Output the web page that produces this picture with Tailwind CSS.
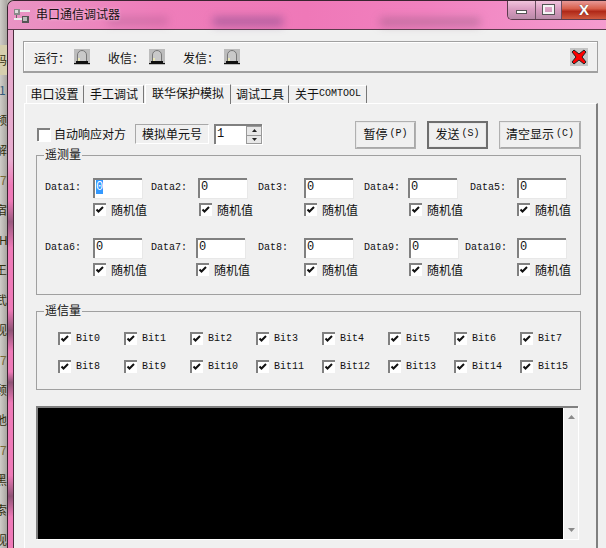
<!DOCTYPE html>
<html>
<head>
<meta charset="utf-8">
<script src="https://cdn.jsdelivr.net/npm/@tailwindcss/browser@4"></script>
</head>
<body class="w-[606px] h-[548px] overflow-hidden bg-[#b5b2ac] font-['Noto_Sans_CJK_SC',sans-serif] text-[12px] leading-none text-[#111]">
<div class="flex w-[606px] h-[548px]">
  <!-- desktop strip -->
  <div class="w-[7px] h-[548px] overflow-hidden shrink-0 pt-[45px] text-[#33300f] bg-[linear-gradient(90deg,#cfcdc8,#a8a5a0)]">
    <div class="h-[30px] flex items-center -ml-[5px] bg-[#d6cfae]">码</div>
    <div class="h-[30px] flex items-center -ml-[1px] text-[#345a7a]">1</div>
    <div class="h-[30px] flex items-center -ml-[5px]">频</div>
    <div class="h-[30px] flex items-center -ml-[5px]">解</div>
    <div class="h-[30px] flex items-center text-[#7a6a3a]">7</div>
    <div class="h-[30px] flex items-center -ml-[5px]">宿</div>
    <div class="h-[30px] flex items-center -ml-[1px]">H</div>
    <div class="h-[30px] flex items-center -ml-[5px]">王</div>
    <div class="h-[30px] flex items-center -ml-[5px]">武</div>
    <div class="h-[30px] flex items-center -ml-[5px]">视</div>
    <div class="h-[30px] flex items-center text-[#7a6a3a]">7</div>
    <div class="h-[30px] flex items-center -ml-[5px]">顾</div>
    <div class="h-[30px] flex items-center -ml-[5px]">地</div>
    <div class="h-[30px] flex items-center text-[#7a6a3a]">7</div>
    <div class="h-[30px] flex items-center -ml-[5px]">黑</div>
    <div class="h-[30px] flex items-center -ml-[5px]">索</div>
    <div class="h-[30px] flex items-center -ml-[5px]">视</div>
  </div>

  <!-- window -->
  <div class="flex-1 min-w-0 flex flex-col border-l border-t border-[#3a2430] rounded-tl-[7px] overflow-hidden">
    <!-- title bar -->
    <div class="relative h-[29px] shrink-0 flex items-start border-b border-[#5c3a4c] bg-[linear-gradient(90deg,#e994c4_0%,#ee7dba_25%,#ef78b8_50%,#f181bf_70%,#f49ccf_100%)]">
      <div class="absolute left-[100px] top-[16px] w-[60px] h-[8px] bg-[#7a3f70]/25 blur-[4px]"></div>
      <div class="absolute left-[205px] top-[16px] w-[70px] h-[9px] bg-[#6a3f80]/45 blur-[4px]"></div>
      <div class="absolute left-[372px] top-[17px] w-[100px] h-[8px] bg-[#7a4f70]/40 blur-[4px]"></div>
      <svg class="relative ml-[5px] mt-[6px]" width="18" height="18" viewBox="0 0 18 18">
        <rect x="1" y="2" width="6" height="6" fill="#8a8a8a"/><rect x="2" y="3" width="3" height="3" fill="#ddd"/>
        <rect x="7" y="3" width="10" height="2" fill="#ececec"/>
        <path d="M3.500 8v4" stroke="#666" stroke-width="1"/>
        <rect x="1" y="11" width="9" height="2" fill="#ececec"/>
        <rect x="9" y="9" width="7" height="7" fill="#555"/><rect x="10" y="10" width="4" height="4" fill="#bbb"/>
      </svg>
      <span class="relative ml-[5px] mt-[7px] text-[#1a1014] [text-shadow:0_0_3px_#f8c8e0]">串口通信调试器</span>
      <div class="relative ml-auto flex h-[20px] w-[99px] mt-[-1px] border-l border-b border-[#5c3a4c] rounded-bl-[5px] overflow-hidden">
        <div class="w-[28px] flex items-center justify-center border-r border-[#6a4f60] bg-[linear-gradient(180deg,#f4c8e0,#d99cc0_50%,#b98aa8)]">
          <div class="w-[11px] h-[4px] mt-[5px] bg-white border border-[#555]"></div>
        </div>
        <div class="w-[26px] flex items-center justify-center border-r border-[#6a4f60] bg-[linear-gradient(180deg,#f4c8e0,#d99cc0_50%,#b98aa8)]">
          <div class="w-[11px] h-[9px] bg-transparent border-2 border-[#f4f4f4] outline outline-[#555]"></div>
        </div>
        <div class="flex-1 flex items-center justify-center bg-[linear-gradient(180deg,#eaa0a0,#d8604c_45%,#b02818_60%,#d05a40)]">
          <span class="text-white text-[15px] font-bold font-['Liberation_Sans',sans-serif] [text-shadow:0_0_1px_#333]">X</span>
        </div>
      </div>
    </div>

    <div class="flex-1 flex min-h-0">
      <!-- frame -->
      <div class="w-[5px] shrink-0 bg-[linear-gradient(180deg,#e6a8cc_0%,#e8aed0_25%,#ef7ab8_30%,#ef7ab8_33%,#9a5a80_37%,#ef7ab8_42%,#ef7ab8_54%,#8f5376_58%,#ef7ab8_62%,#ef7ab8_66%,#8f5376_68%,#ef7ab8_72%,#ef7ab8_86%,#8f5376_90%,#ef7ab8_94%,#ef7ab8_100%)]"></div>
      <!-- client -->
      <div class="flex-1 min-w-0 border-l border-[#4a2c3c] bg-[#f0f0f0] pl-[9px] pt-[11px]">
        <!-- status -->
        <div class="w-[575px] h-[32px] flex items-center border border-[#a0a0a0] border-b-2 shadow-[inset_1px_1px_0_#fff] pl-[10px] pr-[9px]">
          <span class="w-[40px] pt-[2px]">运行：</span>
          <svg width="16" height="16" viewBox="0 0 16 16" class="mr-[18px]"><rect width="16" height="16" fill="#bcbcbc"/><path d="M3.500 12.500V6a4.500 4.500 0 0 1 9 0v6.500" fill="#c9c9c9" stroke="#777"/><path d="M5 9v3" stroke="#f4f1b0" stroke-width="1.500"/><rect x="2" y="12" width="12" height="2" fill="#111"/><rect x="0" y="14" width="16" height="1" fill="#111"/></svg>
          <span class="w-[41px] pt-[2px]">收信：</span>
          <svg width="16" height="16" viewBox="0 0 16 16" class="mr-[18px]"><rect width="16" height="16" fill="#bcbcbc"/><path d="M3.500 12.500V6a4.500 4.500 0 0 1 9 0v6.500" fill="#c9c9c9" stroke="#777"/><path d="M5 9v3" stroke="#f4f1b0" stroke-width="1.500"/><rect x="2" y="12" width="12" height="2" fill="#111"/><rect x="0" y="14" width="16" height="1" fill="#111"/></svg>
          <span class="w-[41px] pt-[2px]">发信：</span>
          <svg width="16" height="16" viewBox="0 0 16 16"><rect width="16" height="16" fill="#bcbcbc"/><path d="M3.500 12.500V6a4.500 4.500 0 0 1 9 0v6.500" fill="#c9c9c9" stroke="#777"/><path d="M5 9v3" stroke="#f4f1b0" stroke-width="1.500"/><rect x="2" y="12" width="12" height="2" fill="#111"/><rect x="0" y="14" width="16" height="1" fill="#111"/></svg>
          <svg class="ml-auto" width="18" height="18" viewBox="0 0 18 18"><rect width="18" height="18" fill="#c4c4c4"/><path d="M2 4l2-2 5 4 5-4 2 2-4 5 4 5-2 2-5-4-5 4-2-2 4-5z" fill="#f00" stroke="#222" stroke-width="1" stroke-linejoin="bevel"/></svg>
        </div>

        <!-- tabs -->
        <div class="flex items-end h-[19px] mt-[11px] pl-[3px] relative z-10">
          <div class="w-[58px] h-[18px] pb-[2px] pr-[1px] flex items-center justify-center border-l border-t border-white border-r border-r-[#777] bg-[#f0f0f0]">串口设置</div>
          <div class="w-[59px] h-[18px] pb-[2px] flex items-center justify-center border-t border-white border-r border-r-[#777] bg-[#f0f0f0] ml-[1px]">手工调试</div>
          <div class="w-[86px] h-[20px] mb-[-1px] pb-[3px] flex items-center justify-center border-l border-t border-white border-r border-r-[#777] bg-[#f0f0f0] ml-[1px]">联华保护模拟</div>
          <div class="w-[57px] h-[18px] pb-[2px] flex items-center justify-center border-t border-white border-r border-r-[#777] bg-[#f0f0f0] ml-[1px]">调试工具</div>
          <div class="w-[77px] h-[18px] pb-[2px] flex items-center justify-center border-t border-white border-r border-r-[#777] bg-[#f0f0f0] ml-[1px]">关于<span class="font-['Liberation_Mono',monospace] text-[10px]">COMTOOL</span></div>
        </div>

        <!-- panel -->
        <div class="w-[574px] ml-[1px] h-[470px] border-l border-t border-white border-r-2 border-r-[#808080] pl-[11px] pt-[17px]">
          <!-- control row -->
          <div class="flex items-center h-[28px] w-[545px]">
            <div class="flex items-center mb-[2px]">
              <div class="ml-[1px] w-[13px] h-[13px] bg-white border-2 border-r-0 border-b-0 border-[#808080] shadow-[1px_1px_0_#fff]"></div>
              <span class="ml-[4px] w-[73px] pb-[1px]">自动响应对方</span>
              <div class="ml-[8px] w-[74px] h-[20px] flex items-center justify-center border border-[#a8a8a8] border-r-white border-b-white">模拟单元号</div>
              <div class="ml-[5px] w-[48px] h-[20px] flex bg-white border-2 border-r-0 border-b-0 border-[#808080] shadow-[1px_1px_0_#fff]">
                <span class="flex-1 pl-[1px] pt-[2px] font-['Liberation_Mono',monospace] text-[12px]">1</span>
                <div class="w-[16px] flex flex-col">
                  <div class="flex-1 flex items-center justify-center bg-[#e8e8e8] border border-[#999] border-b-0"><svg width="5" height="3"><path d="M2.500 0L5 3H0z" fill="#222"/></svg></div>
                  <div class="flex-1 flex items-center justify-center bg-[#e8e8e8] border border-[#999]"><svg width="5" height="3"><path d="M0 0h5L2.500 3z" fill="#222"/></svg></div>
                </div>
              </div>
            </div>
            <div class="ml-auto flex gap-[11px]">
              <div class="w-[61px] h-[28px] pb-[2px] flex items-center justify-center border-2 border-[#a8a8a8] border-l-[#e8e8e8] border-t-[#e8e8e8] outline outline-[#b0b0b0] -outline-offset-1">暂停<span class="font-['Liberation_Mono',monospace] text-[10px] ml-[2px]">(P)</span></div>
              <div class="w-[61px] h-[28px] pb-[2px] flex items-center justify-center border-2 border-[#6e6e6e] shadow-[inset_0_0_0_1px_#e8e8e8]">发送<span class="font-['Liberation_Mono',monospace] text-[10px] ml-[2px]">(S)</span></div>
              <div class="w-[82px] h-[28px] pb-[2px] flex items-center justify-center border-2 border-[#a8a8a8] border-l-[#e8e8e8] border-t-[#e8e8e8] outline outline-[#b0b0b0] -outline-offset-1">清空显示<span class="font-['Liberation_Mono',monospace] text-[10px] ml-[2px]">(C)</span></div>
            </div>
          </div>

          <!-- telemetry group -->
          <div class="relative mt-[6px] w-[545px] h-[140px] border border-[#a0a0a0] pt-[22px] pl-[8px] font-['Liberation_Mono',monospace] text-[10px]">
            <span class="absolute -top-[8px] left-[7px] px-[1px] bg-[#f0f0f0] font-['Noto_Sans_CJK_SC',sans-serif] text-[12px]">遥测量</span>

            <div class="flex items-center h-[20px]">
              <span class="w-[48px]">Data1:</span>
              <div class="w-[49px] h-[20px] bg-white border-2 border-r-0 border-b-0 border-[#808080] shadow-[1px_1px_0_#e8e8e8] pl-[1px] pt-[1px] text-[12px]"><span class="bg-[#3399ff] text-white">0</span></div>
              <span class="ml-[9px] w-[47px]">Data2:</span>
              <div class="w-[49px] h-[20px] bg-white border-2 border-r-0 border-b-0 border-[#808080] shadow-[1px_1px_0_#e8e8e8] pl-[1px] pt-[1px] text-[12px]">0</div>
              <span class="ml-[11px] w-[46px]">Dat3:</span>
              <div class="w-[49px] h-[20px] bg-white border-2 border-r-0 border-b-0 border-[#808080] shadow-[1px_1px_0_#e8e8e8] pl-[1px] pt-[1px] text-[12px]">0</div>
              <span class="ml-[11px] w-[44px]">Data4:</span>
              <div class="w-[49px] h-[20px] bg-white border-2 border-r-0 border-b-0 border-[#808080] shadow-[1px_1px_0_#e8e8e8] pl-[1px] pt-[1px] text-[12px]">0</div>
              <span class="ml-[13px] w-[47px]">Data5:</span>
              <div class="w-[49px] h-[20px] bg-white border-2 border-r-0 border-b-0 border-[#808080] shadow-[1px_1px_0_#e8e8e8] pl-[1px] pt-[1px] text-[12px]">0</div>
            </div>
            <div class="flex items-center h-[13px] mt-[5px] pl-[48px] font-['Noto_Sans_CJK_SC',sans-serif] text-[12px]">
              <div class="w-[54px] flex items-center gap-[5px]"><svg class="w-[13px] h-[13px] shrink-0" viewBox="0 0 13 13"><rect width="13" height="13" fill="#fff"/><path d="M1 13V1h12" fill="none" stroke="#808080" stroke-width="2"/><path d="M3.500 6.500l2 2 4.500-4.500" fill="none" stroke="#111" stroke-width="2"/></svg>随机值</div>
              <div class="ml-[52px] w-[54px] flex items-center gap-[5px]"><svg class="w-[13px] h-[13px] shrink-0" viewBox="0 0 13 13"><rect width="13" height="13" fill="#fff"/><path d="M1 13V1h12" fill="none" stroke="#808080" stroke-width="2"/><path d="M3.500 6.500l2 2 4.500-4.500" fill="none" stroke="#111" stroke-width="2"/></svg>随机值</div>
              <div class="ml-[51px] w-[54px] flex items-center gap-[5px]"><svg class="w-[13px] h-[13px] shrink-0" viewBox="0 0 13 13"><rect width="13" height="13" fill="#fff"/><path d="M1 13V1h12" fill="none" stroke="#808080" stroke-width="2"/><path d="M3.500 6.500l2 2 4.500-4.500" fill="none" stroke="#111" stroke-width="2"/></svg>随机值</div>
              <div class="ml-[51px] w-[54px] flex items-center gap-[5px]"><svg class="w-[13px] h-[13px] shrink-0" viewBox="0 0 13 13"><rect width="13" height="13" fill="#fff"/><path d="M1 13V1h12" fill="none" stroke="#808080" stroke-width="2"/><path d="M3.500 6.500l2 2 4.500-4.500" fill="none" stroke="#111" stroke-width="2"/></svg>随机值</div>
              <div class="ml-[54px] w-[54px] flex items-center gap-[5px]"><svg class="w-[13px] h-[13px] shrink-0" viewBox="0 0 13 13"><rect width="13" height="13" fill="#fff"/><path d="M1 13V1h12" fill="none" stroke="#808080" stroke-width="2"/><path d="M3.500 6.500l2 2 4.500-4.500" fill="none" stroke="#111" stroke-width="2"/></svg>随机值</div>
            </div>

            <div class="flex items-center h-[20px] mt-[22px]">
              <span class="w-[48px]">Data6:</span>
              <div class="w-[49px] h-[20px] bg-white border-2 border-r-0 border-b-0 border-[#808080] shadow-[1px_1px_0_#e8e8e8] pl-[1px] pt-[1px] text-[12px]">0</div>
              <span class="ml-[9px] w-[45px]">Data7:</span>
              <div class="w-[49px] h-[20px] bg-white border-2 border-r-0 border-b-0 border-[#808080] shadow-[1px_1px_0_#e8e8e8] pl-[1px] pt-[1px] text-[12px]">0</div>
              <span class="ml-[13px] w-[46px]">Dat8:</span>
              <div class="w-[49px] h-[20px] bg-white border-2 border-r-0 border-b-0 border-[#808080] shadow-[1px_1px_0_#e8e8e8] pl-[1px] pt-[1px] text-[12px]">0</div>
              <span class="ml-[11px] w-[45px]">Data9:</span>
              <div class="w-[49px] h-[20px] bg-white border-2 border-r-0 border-b-0 border-[#808080] shadow-[1px_1px_0_#e8e8e8] pl-[1px] pt-[1px] text-[12px]">0</div>
              <span class="ml-[7px] w-[52px]">Data10:</span>
              <div class="w-[49px] h-[20px] bg-white border-2 border-r-0 border-b-0 border-[#808080] shadow-[1px_1px_0_#e8e8e8] pl-[1px] pt-[1px] text-[12px]">0</div>
            </div>
            <div class="flex items-center h-[13px] mt-[5px] pl-[48px] font-['Noto_Sans_CJK_SC',sans-serif] text-[12px]">
              <div class="w-[54px] flex items-center gap-[5px]"><svg class="w-[13px] h-[13px] shrink-0" viewBox="0 0 13 13"><rect width="13" height="13" fill="#fff"/><path d="M1 13V1h12" fill="none" stroke="#808080" stroke-width="2"/><path d="M3.500 6.500l2 2 4.500-4.500" fill="none" stroke="#111" stroke-width="2"/></svg>随机值</div>
              <div class="ml-[49px] w-[54px] flex items-center gap-[5px]"><svg class="w-[13px] h-[13px] shrink-0" viewBox="0 0 13 13"><rect width="13" height="13" fill="#fff"/><path d="M1 13V1h12" fill="none" stroke="#808080" stroke-width="2"/><path d="M3.500 6.500l2 2 4.500-4.500" fill="none" stroke="#111" stroke-width="2"/></svg>随机值</div>
              <div class="ml-[54px] w-[54px] flex items-center gap-[5px]"><svg class="w-[13px] h-[13px] shrink-0" viewBox="0 0 13 13"><rect width="13" height="13" fill="#fff"/><path d="M1 13V1h12" fill="none" stroke="#808080" stroke-width="2"/><path d="M3.500 6.500l2 2 4.500-4.500" fill="none" stroke="#111" stroke-width="2"/></svg>随机值</div>
              <div class="ml-[51px] w-[54px] flex items-center gap-[5px]"><svg class="w-[13px] h-[13px] shrink-0" viewBox="0 0 13 13"><rect width="13" height="13" fill="#fff"/><path d="M1 13V1h12" fill="none" stroke="#808080" stroke-width="2"/><path d="M3.500 6.500l2 2 4.500-4.500" fill="none" stroke="#111" stroke-width="2"/></svg>随机值</div>
              <div class="ml-[54px] w-[54px] flex items-center gap-[5px]"><svg class="w-[13px] h-[13px] shrink-0" viewBox="0 0 13 13"><rect width="13" height="13" fill="#fff"/><path d="M1 13V1h12" fill="none" stroke="#808080" stroke-width="2"/><path d="M3.500 6.500l2 2 4.500-4.500" fill="none" stroke="#111" stroke-width="2"/></svg>随机值</div>
            </div>
          </div>

          <!-- bits group -->
          <div class="relative mt-[16px] w-[545px] h-[79px] border border-[#a0a0a0] pt-[20px] pl-[21px] font-['Liberation_Mono',monospace] text-[10px]">
            <span class="absolute -top-[8px] left-[7px] px-[1px] bg-[#f0f0f0] font-['Noto_Sans_CJK_SC',sans-serif] text-[12px]">遥信量</span>
            <div class="grid grid-cols-[repeat(8,66px)] gap-y-[15px]">
              <div class="flex items-center gap-[5px] h-[13px]"><svg class="w-[13px] h-[13px] shrink-0" viewBox="0 0 13 13"><rect width="13" height="13" fill="#fff"/><path d="M1 13V1h12" fill="none" stroke="#808080" stroke-width="2"/><path d="M3.500 6.500l2 2 4.500-4.500" fill="none" stroke="#111" stroke-width="2"/></svg>Bit0</div>
              <div class="flex items-center gap-[5px] h-[13px]"><svg class="w-[13px] h-[13px] shrink-0" viewBox="0 0 13 13"><rect width="13" height="13" fill="#fff"/><path d="M1 13V1h12" fill="none" stroke="#808080" stroke-width="2"/><path d="M3.500 6.500l2 2 4.500-4.500" fill="none" stroke="#111" stroke-width="2"/></svg>Bit1</div>
              <div class="flex items-center gap-[5px] h-[13px]"><svg class="w-[13px] h-[13px] shrink-0" viewBox="0 0 13 13"><rect width="13" height="13" fill="#fff"/><path d="M1 13V1h12" fill="none" stroke="#808080" stroke-width="2"/><path d="M3.500 6.500l2 2 4.500-4.500" fill="none" stroke="#111" stroke-width="2"/></svg>Bit2</div>
              <div class="flex items-center gap-[5px] h-[13px]"><svg class="w-[13px] h-[13px] shrink-0" viewBox="0 0 13 13"><rect width="13" height="13" fill="#fff"/><path d="M1 13V1h12" fill="none" stroke="#808080" stroke-width="2"/><path d="M3.500 6.500l2 2 4.500-4.500" fill="none" stroke="#111" stroke-width="2"/></svg>Bit3</div>
              <div class="flex items-center gap-[5px] h-[13px]"><svg class="w-[13px] h-[13px] shrink-0" viewBox="0 0 13 13"><rect width="13" height="13" fill="#fff"/><path d="M1 13V1h12" fill="none" stroke="#808080" stroke-width="2"/><path d="M3.500 6.500l2 2 4.500-4.500" fill="none" stroke="#111" stroke-width="2"/></svg>Bit4</div>
              <div class="flex items-center gap-[5px] h-[13px]"><svg class="w-[13px] h-[13px] shrink-0" viewBox="0 0 13 13"><rect width="13" height="13" fill="#fff"/><path d="M1 13V1h12" fill="none" stroke="#808080" stroke-width="2"/><path d="M3.500 6.500l2 2 4.500-4.500" fill="none" stroke="#111" stroke-width="2"/></svg>Bit5</div>
              <div class="flex items-center gap-[5px] h-[13px]"><svg class="w-[13px] h-[13px] shrink-0" viewBox="0 0 13 13"><rect width="13" height="13" fill="#fff"/><path d="M1 13V1h12" fill="none" stroke="#808080" stroke-width="2"/><path d="M3.500 6.500l2 2 4.500-4.500" fill="none" stroke="#111" stroke-width="2"/></svg>Bit6</div>
              <div class="flex items-center gap-[5px] h-[13px]"><svg class="w-[13px] h-[13px] shrink-0" viewBox="0 0 13 13"><rect width="13" height="13" fill="#fff"/><path d="M1 13V1h12" fill="none" stroke="#808080" stroke-width="2"/><path d="M3.500 6.500l2 2 4.500-4.500" fill="none" stroke="#111" stroke-width="2"/></svg>Bit7</div>
              <div class="flex items-center gap-[5px] h-[13px]"><svg class="w-[13px] h-[13px] shrink-0" viewBox="0 0 13 13"><rect width="13" height="13" fill="#fff"/><path d="M1 13V1h12" fill="none" stroke="#808080" stroke-width="2"/><path d="M3.500 6.500l2 2 4.500-4.500" fill="none" stroke="#111" stroke-width="2"/></svg>Bit8</div>
              <div class="flex items-center gap-[5px] h-[13px]"><svg class="w-[13px] h-[13px] shrink-0" viewBox="0 0 13 13"><rect width="13" height="13" fill="#fff"/><path d="M1 13V1h12" fill="none" stroke="#808080" stroke-width="2"/><path d="M3.500 6.500l2 2 4.500-4.500" fill="none" stroke="#111" stroke-width="2"/></svg>Bit9</div>
              <div class="flex items-center gap-[5px] h-[13px]"><svg class="w-[13px] h-[13px] shrink-0" viewBox="0 0 13 13"><rect width="13" height="13" fill="#fff"/><path d="M1 13V1h12" fill="none" stroke="#808080" stroke-width="2"/><path d="M3.500 6.500l2 2 4.500-4.500" fill="none" stroke="#111" stroke-width="2"/></svg>Bit10</div>
              <div class="flex items-center gap-[5px] h-[13px]"><svg class="w-[13px] h-[13px] shrink-0" viewBox="0 0 13 13"><rect width="13" height="13" fill="#fff"/><path d="M1 13V1h12" fill="none" stroke="#808080" stroke-width="2"/><path d="M3.500 6.500l2 2 4.500-4.500" fill="none" stroke="#111" stroke-width="2"/></svg>Bit11</div>
              <div class="flex items-center gap-[5px] h-[13px]"><svg class="w-[13px] h-[13px] shrink-0" viewBox="0 0 13 13"><rect width="13" height="13" fill="#fff"/><path d="M1 13V1h12" fill="none" stroke="#808080" stroke-width="2"/><path d="M3.500 6.500l2 2 4.500-4.500" fill="none" stroke="#111" stroke-width="2"/></svg>Bit12</div>
              <div class="flex items-center gap-[5px] h-[13px]"><svg class="w-[13px] h-[13px] shrink-0" viewBox="0 0 13 13"><rect width="13" height="13" fill="#fff"/><path d="M1 13V1h12" fill="none" stroke="#808080" stroke-width="2"/><path d="M3.500 6.500l2 2 4.500-4.500" fill="none" stroke="#111" stroke-width="2"/></svg>Bit13</div>
              <div class="flex items-center gap-[5px] h-[13px]"><svg class="w-[13px] h-[13px] shrink-0" viewBox="0 0 13 13"><rect width="13" height="13" fill="#fff"/><path d="M1 13V1h12" fill="none" stroke="#808080" stroke-width="2"/><path d="M3.500 6.500l2 2 4.500-4.500" fill="none" stroke="#111" stroke-width="2"/></svg>Bit14</div>
              <div class="flex items-center gap-[5px] h-[13px]"><svg class="w-[13px] h-[13px] shrink-0" viewBox="0 0 13 13"><rect width="13" height="13" fill="#fff"/><path d="M1 13V1h12" fill="none" stroke="#808080" stroke-width="2"/><path d="M3.500 6.500l2 2 4.500-4.500" fill="none" stroke="#111" stroke-width="2"/></svg>Bit15</div>
            </div>
          </div>

          <!-- output -->
          <div class="mt-[16px] w-[542px] h-[133px] flex border-2 border-r-0 border-b-0 border-[#808080] shadow-[1px_1px_0_#fff]">
            <div class="flex-1 bg-black"></div>
            <div class="w-[15px] flex flex-col items-center justify-between py-[7px] bg-[#f0f0f0] border-l border-white">
              <svg width="7" height="4"><path d="M3.500 0L7 4H0z" fill="#8a8a8a"/></svg>
              <svg width="7" height="4"><path d="M0 0h7L3.500 4z" fill="#8a8a8a"/></svg>
            </div>
          </div>
        </div>
      </div>
    </div>
  </div>
</div>
</body>
</html>
